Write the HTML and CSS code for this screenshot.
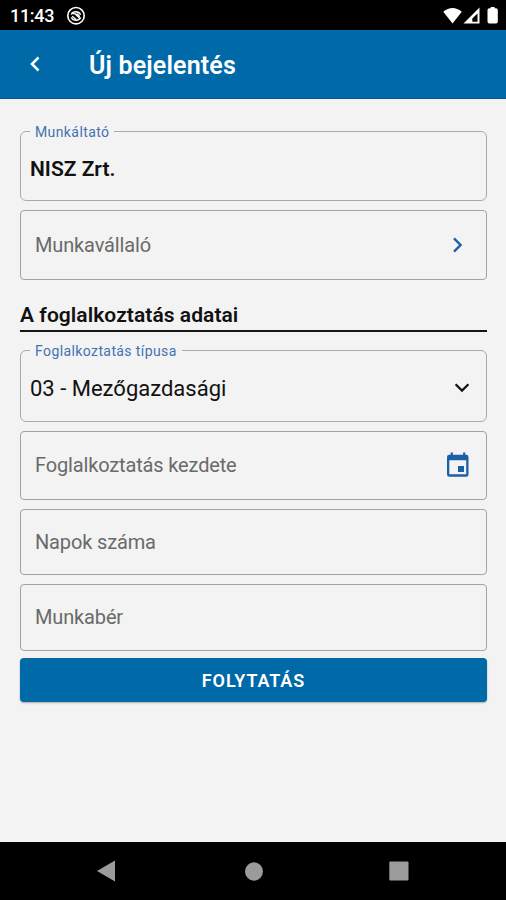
FILE: index.html
```html
<!DOCTYPE html>
<html lang="hu">
<head>
<meta charset="utf-8">
<title>Új bejelentés</title>
<link rel="stylesheet" href="styles.css">
</head>
<body>
<div class="status">
  <span class="time">11:43</span>
  <svg class="app-icon" width="20" height="20" viewBox="0 0 20 20" fill="none" stroke="#fff">
    <circle cx="10" cy="9.700" r="8.200" stroke-width="1.600"/>
    <path d="M5.200 8.500C7 4.900 12.500 4.700 14.700 8.600M14.800 11.500C13 15.100 7.500 15.300 5.300 11.400" stroke-width="1.300"/>
    <path d="M5.600 7.300l3.400.6 5.200 5.200M6.200 10.300l4 3.200" stroke-width="1.300"/>
    <path d="M8.800 7.400h3l2.200 2.300v2.400z" fill="#fff" stroke="none"/>
  </svg>
  <svg class="status-icons" width="62" height="20" viewBox="0 0 62 20" fill="#fff">
    <path d="M1.300 5.700Q10.500-1.800 19.800 5.700L10.500 17.400z"/>
    <path fill-rule="evenodd" d="M37.500 1.500V17.500H21.500zM35.500 7.400L30.300 12.600V15.800H35.500z"/>
    <path d="M48.700 1h3.900v1.200h1.400q1.800 0 1.800 1.800v11.800q0 1.800-1.800 1.800h-6.700q-1.800 0-1.800-1.800V4q0-1.800 1.800-1.800h1.400z"/>
  </svg>
</div>
<header class="appbar">
  <svg class="back" width="12" height="16" viewBox="0 0 12 16" fill="none" stroke="#fff" stroke-width="2.500"><path d="M9.500 1.500L3 8l6.500 6.500"/></svg>
  <h1>Új bejelentés</h1>
</header>
<main>
  <fieldset class="outlined employer">
    <legend>Munkáltató</legend>
    <div class="value strong"><span>NISZ Zrt.</span></div>
  </fieldset>
  <div class="field worker">
    <span>Munkavállaló</span>
    <svg width="12" height="16" viewBox="0 0 12 16" fill="none" stroke="#1f5fa6" stroke-width="2.400"><path d="M2 1.400L8.600 8 2 14.600"/></svg>
  </div>
  <h2>A foglalkoztatás adatai</h2>
  <fieldset class="outlined type">
    <legend>Foglalkoztatás típusa</legend>
    <div class="value"><span>03 - Mezőgazdasági</span>
      <svg width="16" height="12" viewBox="0 0 16 12" fill="none" stroke="#111" stroke-width="2.200"><path d="M1.600 2.200L8 8.600l6.400-6.400"/></svg>
    </div>
  </fieldset>
  <div class="field start">
    <span>Foglalkoztatás kezdete</span>
    <svg width="24" height="26" viewBox="0 0 24 26"><path fill="#1b5fa8" fill-rule="evenodd" d="M4.600.5h2.300v2.200h10.200V.5h2.300v2.200h.8q2.300 0 2.300 2.300v17.400q0 2.300-2.300 2.300H3.300Q1 24.700 1 22.400V5Q1 2.700 3.300 2.700h1.300zM3.300 8.300v13.900h16.900V8.300zM12 14h6v6h-6z"/></svg>
  </div>
  <div class="field days"><span>Napok száma</span></div>
  <div class="field wage"><span>Munkabér</span></div>
  <button type="button">FOLYTATÁS</button>
</main>
<nav>
  <svg width="18" height="22" viewBox="0 0 18 22" fill="#9b9b9b"><path d="M0 11L18 .5v21z"/></svg>
  <svg class="home" width="18" height="19" viewBox="0 0 18 19" fill="#9b9b9b"><ellipse cx="9" cy="9.500" rx="9" ry="9.300"/></svg>
  <svg width="20" height="20" viewBox="0 0 20 20" fill="#9b9b9b"><rect x=".3" y=".5" width="19.200" height="19" rx="1"/></svg>
</nav>
</body>
</html>
```
FILE: styles.css
```css
* { box-sizing: border-box; }
body {
  margin: 0;
  width: 506px;
  height: 900px;
  display: flex;
  flex-direction: column;
  background: #f3f3f3;
  font-family: Roboto, "Liberation Sans", sans-serif;
  color: #111;
  overflow: hidden;
}
svg { display: block; flex: none; }
.status {
  height: 30px;
  background: #000;
  color: #fff;
  display: flex;
  align-items: center;
  padding: 1px 2px 0 10px;
}
.time { width: 56px; font-size: 18px; font-weight: 500; letter-spacing: -0.3px; }
.status-icons { margin-left: auto; }
.appbar {
  height: 69px;
  background: #0069a7;
  border-bottom: 1px solid #0a5491;
  color: #fff;
  display: flex;
  align-items: center;
  padding-left: 29px;
}
.back { margin-right: 48px; }
h1 { margin: 4px 0 0; font-size: 25px; font-weight: 600; line-height: 30px; letter-spacing: 0.15px; }
main {
  flex: 1;
  padding: 25px 19px 0 20px;
  display: flex;
  flex-direction: column;
}
.outlined {
  margin: 0;
  padding: 0 16px 0 9px;
  border: 1px solid #a9a9a9;
  border-radius: 6px;
  min-width: 0;
}
legend {
  height: 15px;
  line-height: 16px;
  padding: 0 5px;
  font-size: 14px;
  letter-spacing: 0.4px;
  color: #4472b1;
}
.employer { height: 77px; }
.type { height: 79px; margin-top: 11px; }
.value {
  height: 60px;
  display: flex;
  align-items: center;
  justify-content: space-between;
  font-size: 22px;
}
.strong { font-size: 21px; font-weight: 600; }
.field {
  border: 1px solid #a3a3a3;
  border-radius: 4px;
  padding: 0 22px 0 14px;
  display: flex;
  align-items: center;
  justify-content: space-between;
  font-size: 20px;
  letter-spacing: -0.15px;
  color: #6a6a6a;
}
.worker { height: 70px; margin-top: 9px; }
.start { height: 69px; margin-top: 9px; padding: 0 16px 2px 14px; }
.days { height: 66px; margin-top: 9px; }
.wage { height: 67px; margin-top: 9px; padding-bottom: 1px; }
h2 {
  margin: 20px 0 0;
  height: 32px;
  border-bottom: 2px solid #161616;
  font-size: 21px;
  font-weight: 600;
  line-height: 30px;
  letter-spacing: 0.06px;
}
button {
  height: 44px;
  margin-top: 7px;
  border: 0;
  border-radius: 4px;
  background: #0069a7;
  color: #fff;
  box-shadow: 0 1px 2px rgba(0, 0, 0, .3);
  font: 600 18px Roboto, "Liberation Sans", sans-serif;
  letter-spacing: 0.9px;
}
nav {
  height: 58px;
  background: #000;
  display: flex;
  justify-content: space-between;
  align-items: center;
  padding: 0 97px;
}
.home { margin-left: 3px; }
```
